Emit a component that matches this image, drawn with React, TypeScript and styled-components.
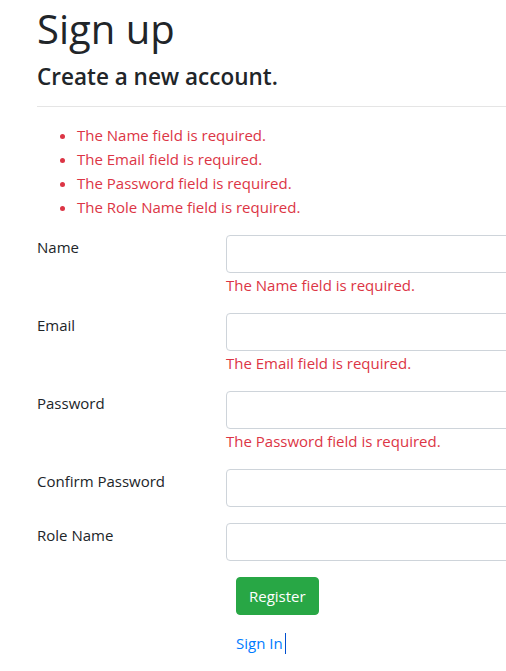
import React from "react";
import styled, { createGlobalStyle } from "styled-components";

const GlobalStyle = createGlobalStyle`
  html, body {
    margin: 0;
    padding: 0;
    background: #ffffff;
    overflow: hidden;
  }
  body {
    font-family: "Open Sans", "Noto Sans", sans-serif;
    font-size: 15px;
    line-height: 24px;
    color: #212529;
  }
  * { box-sizing: border-box; }
`;

const Page = styled.main`
  width: 640px;
  padding: 0 0 0 37px;
`;

const Title = styled.h1`
  margin: 5px 0 0;
  font-size: 40px;
  font-weight: 500;
  line-height: 48px;
`;

const Subtitle = styled.h4`
  margin: 10px 0 0;
  font-size: 22.5px;
  font-weight: 600;
  line-height: 28px;
`;

const Rule = styled.hr`
  margin: 15px 0 16px;
  border: 0;
  border-top: 1px solid rgba(0, 0, 0, 0.1);
`;

const Summary = styled.ul`
  margin: 0 0 16px;
  padding-left: 40px;
  color: #dc3545;
  line-height: 24px;
`;

const FormGroup = styled.div`
  display: grid;
  grid-template-columns: 189px 1fr;
  margin-bottom: 16px;
`;

const Label = styled.label`
  line-height: 24px;
`;

const Field = styled.div`
  display: flex;
  flex-direction: column;
`;

const Input = styled.input`
  display: block;
  width: 100%;
  height: 38px;
  padding: 6px 12px;
  font: inherit;
  color: #495057;
  background: #fff;
  border: 1px solid #ced4da;
  border-radius: 4px;
  outline: none;
`;

const FieldError = styled.span`
  color: #dc3545;
  line-height: 24px;
`;

const Actions = styled.div`
  display: flex;
  flex-direction: column;
  align-items: flex-start;
  gap: 16px;
  padding-left: 199px;
`;

const Button = styled.button`
  height: 38px;
  padding: 6px 12px;
  font: inherit;
  line-height: 24px;
  color: #fff;
  background: #28a745;
  border: 1px solid #28a745;
  border-radius: 4px;
`;

const LinkText = styled.a`
  color: #007bff;
  text-decoration: none;
  line-height: 24px;
  display: inline-flex;
  align-items: center;
`;

const Caret = styled.span`
  display: inline-block;
  width: 1px;
  height: 21px;
  margin-left: 2px;
  background: #0050d0;
`;

const fields = [
  { label: "Name", error: "The Name field is required.", type: "text" },
  { label: "Email", error: "The Email field is required.", type: "email" },
  { label: "Password", error: "The Password field is required.", type: "password" },
  { label: "Confirm Password", error: "", type: "password" },
  { label: "Role Name", error: "", type: "text" },
];

export default function App() {
  return (
    <>
      <GlobalStyle />
      <Page>
        <Title>Sign up</Title>
        <Subtitle>Create a new account.</Subtitle>
        <Rule />
        <Summary>
          <li>The Name field is required.</li>
          <li>The Email field is required.</li>
          <li>The Password field is required.</li>
          <li>The Role Name field is required.</li>
        </Summary>
        {fields.map((f) => (
          <FormGroup key={f.label}>
            <Label>{f.label}</Label>
            <Field>
              <Input type={f.type} />
              {f.error && <FieldError>{f.error}</FieldError>}
            </Field>
          </FormGroup>
        ))}
        <Actions>
          <Button type="button">Register</Button>
          <LinkText href="#">
            Sign In
            <Caret />
          </LinkText>
        </Actions>
      </Page>
    </>
  );
}
